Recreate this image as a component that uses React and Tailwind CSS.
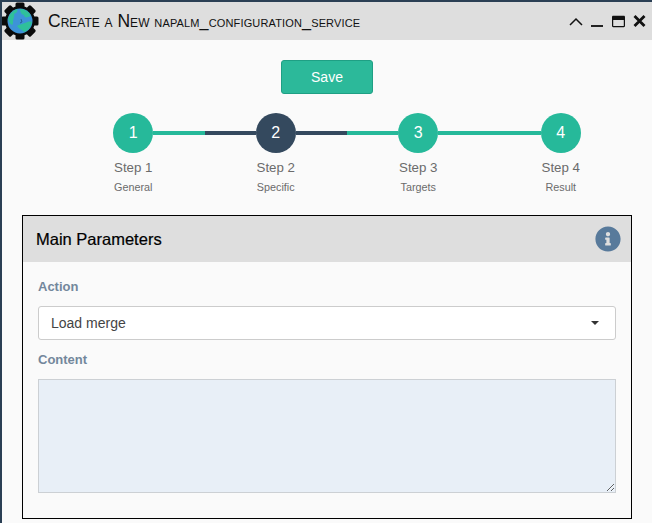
import React from 'react';
import { FaInfoCircle, FaRegWindowMaximize } from 'react-icons/fa';

const steps = [
  { n: 1, title: 'General', left: '', right: 'bg-[#26b99a]', circle: 'bg-[#26b99a]' },
  { n: 2, title: 'Specific', left: 'bg-[#34495e]', right: 'bg-[#34495e]', circle: 'bg-[#34495e]' },
  { n: 3, title: 'Targets', left: 'bg-[#26b99a]', right: 'bg-[#26b99a]', circle: 'bg-[#26b99a]' },
  { n: 4, title: 'Result', left: 'bg-[#26b99a]', right: '', circle: 'bg-[#26b99a]' },
];

function Logo() {
  const teeth = [0, 45, 90, 135, 180, 225, 270, 315];
  return (
    <svg width="40" height="40" viewBox="0 0 40 40" className="shrink-0 -ml-[2px]">
      {teeth.map((a) => (
        <rect key={a} x="15.5" y="1.5" width="9" height="8" rx="1.5" fill="#0b0b0b" transform={`rotate(${a} 20 20)`} />
      ))}
      <circle cx="20" cy="20" r="15" fill="#0b0b0b" />
      <circle cx="20" cy="20" r="12.5" fill="#3d93d8" />
      <path d="M8 18c1-4 4-8 9-10 1 2 0 4-3 5 1 3-1 4-1 8 0 1 0 2-1 3-2-1-3-3-4-6z" fill="#2fc09a" />
      <path d="M20 8c4 0 8 2 10 5 1 2 0 3-2 3-2 1-4 0-4-2-2 0-4-3-4-6z" fill="#2fc09a" />
      <path d="M17 25c3-2 6-2 8-3 2-1 5-2 7-1-1 5-4 9-8 10-1-2-5-3-7-6z" fill="#2fc09a" />
      <path d="M21 18l1 3-2 1" stroke="#1d4f78" strokeWidth="0.7" fill="none" />
    </svg>
  );
}

function Step({ step }) {
  return (
    <div className="w-[142.5px] flex flex-col items-center">
      <div className="w-full flex items-center">
        <div className={`flex-1 h-1 ${step.left}`}></div>
        <div className={`w-10 h-10 rounded-full flex items-center justify-center text-white text-base ${step.circle}`}>
          {step.n}
        </div>
        <div className={`flex-1 h-1 ${step.right}`}></div>
      </div>
      <div className="mt-[7px] text-[13.3px] leading-4 text-[#6b6b6b]">Step {step.n}</div>
      <div className="mt-[3px] text-[10.8px] leading-4 text-[#6b6b6b]">{step.title}</div>
    </div>
  );
}

export default function App() {
  return (
    <div className="w-[652px] h-[523px] overflow-hidden bg-[#fafafa] border-t-2 border-l-2 border-[#2a3f54] font-['Liberation_Sans',Arial,sans-serif]">
      <div className="h-[38px] bg-[#dedede] flex items-center">
        <Logo />
        <div className="ml-[8px] text-[17.5px] text-[#111] [font-variant:small-caps] whitespace-nowrap">
          Create a New <span className="text-[16.2px] tracking-[0.14px]">napalm_configuration_service</span>
        </div>
        <div className="ml-auto mr-[6px] flex items-center text-[#111]">
          <svg width="14" height="9" viewBox="0 0 14 9" fill="none" stroke="#111" strokeWidth="1.5">
            <path d="M1 8 L7 2 L13 8" />
          </svg>
          <div className="ml-[8px] mt-[10px] w-[12px] h-[2px] bg-[#222]"></div>
          <FaRegWindowMaximize className="ml-[9px] text-[13px]" />
          <svg width="13" height="12" viewBox="0 0 13 12" fill="none" stroke="#111" strokeWidth="2.8" className="ml-[8px]">
            <path d="M1.5 1 L11.5 11 M11.5 1 L1.5 11" />
          </svg>
        </div>
      </div>

      <div className="flex justify-center mt-5">
        <button className="w-[92px] h-[34px] bg-[#2cb99a] border border-[#1f9f84] rounded-[3px] text-white text-sm">
          Save
        </button>
      </div>

      <div className="flex ml-[60px] mt-[19px]">
        {steps.map((s) => (
          <Step key={s.n} step={s} />
        ))}
      </div>

      <div className="ml-5 mt-[20px] w-[610px] h-[304px] border border-black bg-[#fafafa]">
        <div className="h-[46px] bg-[#dedede] flex items-center justify-between pl-[13px] pr-[10px]">
          <div className="text-[16.5px] text-black font-medium [-webkit-text-stroke:0.2px_black]">Main Parameters</div>
          <FaInfoCircle className="text-[26px] text-[#587a9b]" />
        </div>
        <div className="px-[15px]">
          <div className="mt-[17px] text-[13px] leading-4 font-bold text-[#73879c]">Action</div>
          <div className="mt-[11px] h-[34px] bg-white border border-[#cccccc] rounded-[3px] flex items-center justify-between pl-3 pr-4 text-sm text-[#444]">
            <span>Load merge</span>
            <span className="w-0 h-0 border-x-4 border-x-transparent border-t-4 border-t-[#333]"></span>
          </div>
          <div className="mt-[12px] text-[13px] leading-4 font-bold text-[#73879c]">Content</div>
          <textarea className="block mt-[11px] w-full h-[114px] bg-[#e8eff7] border border-[#ccd0d4] outline-none"></textarea>
        </div>
      </div>
    </div>
  );
}
